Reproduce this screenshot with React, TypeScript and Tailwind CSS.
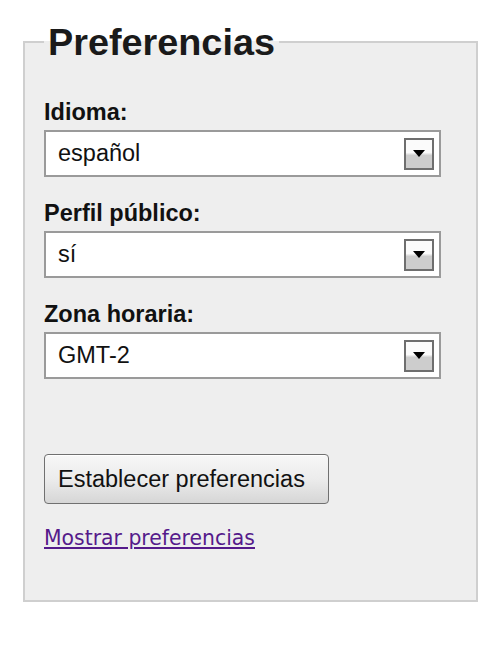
export default function App() {
  const fields = [
    { label: "Idioma:", value: "español" },
    { label: "Perfil público:", value: "sí" },
    { label: "Zona horaria:", value: "GMT-2" },
  ];

  return (
    <div className="min-h-screen bg-white pl-[23px] pt-[22px] font-['Liberation_Sans',Arial,sans-serif] text-[#111]">
      <fieldset className="w-[455px] border-2 border-[#cfcfcf] bg-[#eeeeee] pl-[19px] pb-[50px]">
        <legend className="px-[4px] text-[37.8px] font-bold leading-[40px] text-[#1a1a1a]">
          Preferencias
        </legend>

        <div className="mt-[37px] flex flex-col gap-[23px]">
          {fields.map((f) => (
            <div key={f.label} className="flex flex-col gap-[4px]">
              <label className="text-[23.5px] font-bold leading-[27px]">{f.label}</label>
              <div className="flex h-[47px] w-[397px] items-center justify-between border-2 border-[#9a9a9a] bg-white pl-[12px] pr-[5px]">
                <span className="text-[23.5px] leading-[27px]">{f.value}</span>
                <span className="flex h-[32px] w-[30px] items-center justify-center border-2 border-[#6e6e6e] bg-gradient-to-b from-[#fbfbfb] from-45% to-[#cdcdcd] to-55%">
                  <svg width="12" height="7" viewBox="0 0 12 7">
                    <path d="M0 0 H12 L6 7 Z" fill="#000" />
                  </svg>
                </span>
              </div>
            </div>
          ))}
        </div>

        <button className="mt-[75px] block h-[50px] w-[285px] rounded-[4px] border border-[#707070] bg-gradient-to-b from-[#f7f7f7] via-[#ececec] to-[#d6d6d6] pl-[13px] text-left text-[23.5px] leading-[27px] text-[#111] shadow-[inset_0_1px_0_#fff]">
          Establecer preferencias
        </button>

        <a
          href="#"
          className="mt-[22px] block w-fit font-['DejaVu_Sans',Verdana,sans-serif] text-[20.4px] leading-[24px] text-[#551a8b] underline"
        >
          Mostrar preferencias
        </a>
      </fieldset>
    </div>
  );
}
